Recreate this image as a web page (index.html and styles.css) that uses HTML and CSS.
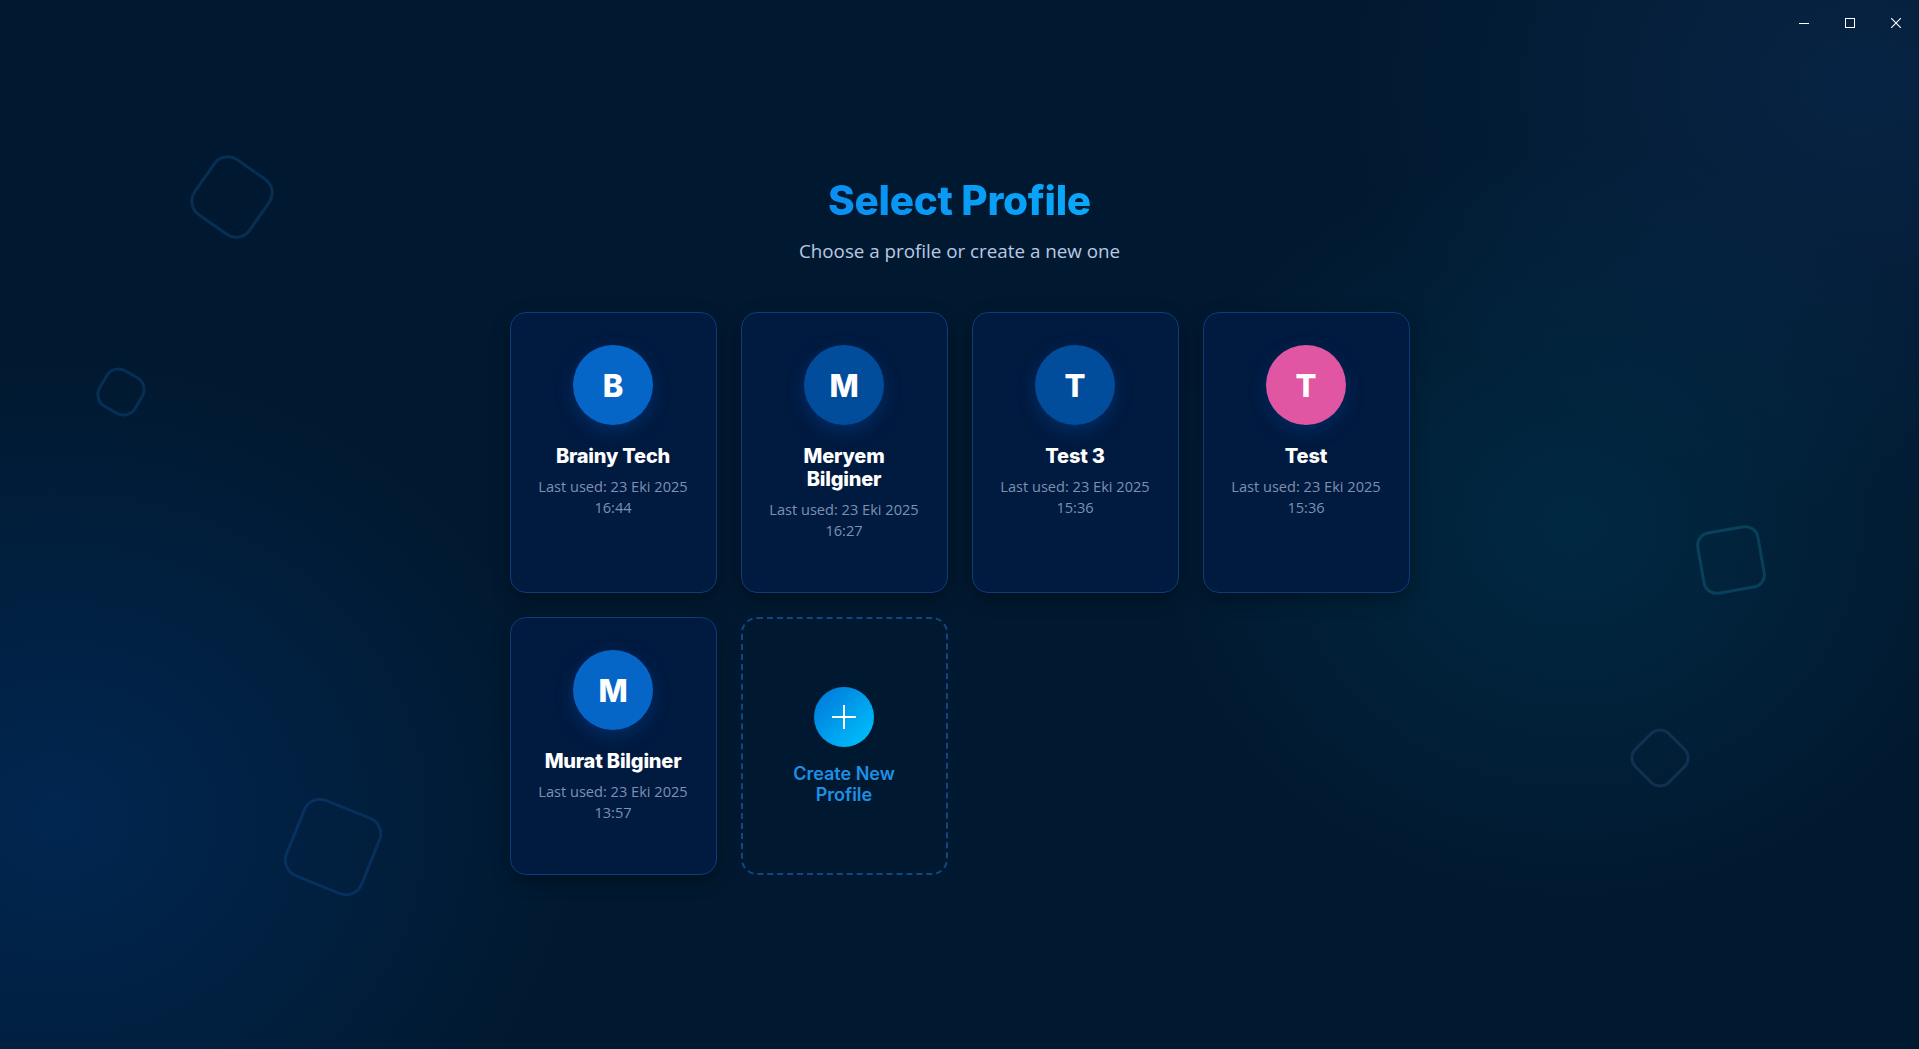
FILE: index.html
```html
<!DOCTYPE html>
<html lang="en">
<head>
<meta charset="utf-8">
<title>Select Profile</title>
<link rel="stylesheet" href="styles.css">
</head>
<body>
<div class="bg-shapes">
  <span class="shape s1"></span>
  <span class="shape s2"></span>
  <span class="shape s3"></span>
  <span class="shape s4"></span>
  <span class="shape s5"></span>
</div>
<header class="titlebar">
  <button class="win-btn" aria-label="Minimize">
    <svg width="10" height="10" viewBox="0 0 10 10"><path d="M0 5.5H10" stroke="#fff" stroke-width="1"/></svg>
  </button>
  <button class="win-btn" aria-label="Maximize">
    <svg width="10" height="10" viewBox="0 0 10 10"><rect x="0.5" y="0.5" width="9" height="9" fill="none" stroke="#fff" stroke-width="1"/></svg>
  </button>
  <button class="win-btn" aria-label="Close">
    <svg width="10" height="10" viewBox="0 0 10 10"><path d="M0 0L10 10M10 0L0 10" stroke="#fff" stroke-width="1.1"/></svg>
  </button>
</header>
<main class="content">
  <h1 class="title">Select Profile</h1>
  <p class="subtitle">Choose a profile or create a new one</p>
  <div class="grid">
    <div class="card">
      <div class="avatar av-blue">B</div>
      <div class="name">Brainy Tech</div>
      <div class="meta">Last used: 23 Eki 2025<br>16:44</div>
    </div>
    <div class="card">
      <div class="avatar av-navy">M</div>
      <div class="name">Meryem<br>Bilginer</div>
      <div class="meta">Last used: 23 Eki 2025<br>16:27</div>
    </div>
    <div class="card">
      <div class="avatar av-navy">T</div>
      <div class="name">Test 3</div>
      <div class="meta">Last used: 23 Eki 2025<br>15:36</div>
    </div>
    <div class="card">
      <div class="avatar av-pink">T</div>
      <div class="name">Test</div>
      <div class="meta">Last used: 23 Eki 2025<br>15:36</div>
    </div>
    <div class="card">
      <div class="avatar av-blue">M</div>
      <div class="name">Murat Bilginer</div>
      <div class="meta">Last used: 23 Eki 2025<br>13:57</div>
    </div>
    <div class="card card-new">
      <div class="plus">
        <svg width="26" height="26" viewBox="0 0 26 26"><path d="M13 1V25M1 13H25" stroke="#fff" stroke-width="2"/></svg>
      </div>
      <div class="new-label">Create New<br>Profile</div>
    </div>
  </div>
</main>
</body>
</html>
```

FILE: styles.css
```css
html, body {
  margin: 0;
  height: 100%;
  overflow: hidden;
}

body {
  position: relative;
  font-family: "Open Sans", "Noto Sans", sans-serif;
  color: #fff;
  background:
    radial-gradient(ellipse 420px 380px at 82% 50%, rgba(0, 70, 100, 0.35), transparent 100%),
    radial-gradient(ellipse 520px 460px at 3% 78%, rgba(0, 55, 120, 0.45), transparent 100%),
    radial-gradient(ellipse 520px 420px at 97% 8%, rgba(20, 55, 105, 0.35), transparent 100%),
    #011930;
}

.bg-shapes {
  position: absolute;
  inset: 0;
  pointer-events: none;
}

.shape {
  position: absolute;
  box-sizing: border-box;
  border: 3px solid rgba(20, 90, 150, 0.35);
  border-radius: 20px;
}

.s1 { left: 197px; top: 162px; width: 70px; height: 70px; transform: rotate(35deg); border-radius: 18px; }
.s2 { left: 99px; top: 370px; width: 44px; height: 44px; transform: rotate(30deg); border-radius: 15px; }
.s3 { left: 1699px; top: 528px; width: 64px; height: 64px; transform: rotate(-10deg); border-radius: 14px; border-color: rgba(20, 110, 140, 0.4); }
.s4 { left: 291px; top: 805px; width: 84px; height: 84px; transform: rotate(22deg); border-radius: 18px; border-color: rgba(20, 80, 150, 0.35); }
.s5 { left: 1635px; top: 733px; width: 50px; height: 50px; transform: rotate(45deg); border-radius: 14px; border-color: rgba(40, 70, 110, 0.45); }

.titlebar {
  position: relative;
  display: flex;
  justify-content: flex-end;
  height: 46px;
}

.win-btn {
  width: 46px;
  height: 46px;
  padding: 0;
  border: 0;
  background: transparent;
  display: flex;
  align-items: center;
  justify-content: center;
}

.content {
  position: relative;
  display: flex;
  flex-direction: column;
  align-items: center;
  padding-top: 131px;
}

.title {
  margin: 0;
  font-family: Inter, sans-serif;
  font-weight: 800;
  font-size: 40.5px;
  line-height: 48px;
  letter-spacing: -0.3px;
  color: #0a9df2;
  background: linear-gradient(90deg, #0a8ff0, #08a8fa);
  -webkit-background-clip: text;
  background-clip: text;
  -webkit-text-fill-color: transparent;
}

.subtitle {
  margin: 14px 0 0;
  font-family: "Open Sans", sans-serif;
  font-weight: 500;
  font-size: 18.8px;
  line-height: 24px;
  color: #b9c9e6;
}

.grid {
  display: grid;
  grid-template-columns: repeat(4, 207px);
  gap: 24px;
  margin-top: 49px;
}

.card {
  box-sizing: border-box;
  display: flex;
  flex-direction: column;
  align-items: center;
  text-align: center;
  padding: 32px 8px 51px;
  background: #011a3f;
  border: 1px solid #0b3d7a;
  border-radius: 16px;
  box-shadow: 0 6px 18px rgba(0, 0, 0, 0.35);
}

.avatar {
  width: 80px;
  height: 80px;
  border-radius: 50%;
  display: flex;
  align-items: center;
  justify-content: center;
  font-family: Inter, sans-serif;
  font-weight: 800;
  font-size: 31px;
  color: #fff;
  box-shadow: 0 6px 18px rgba(0, 90, 200, 0.3);
}

.av-blue { background: #0566c8; }
.av-navy { background: #024d9b; }
.av-pink { background: #e056a2; box-shadow: 0 6px 18px rgba(0, 90, 200, 0.25); }

.name {
  margin-top: 20px;
  font-family: Inter, sans-serif;
  font-weight: 800;
  font-size: 20px;
  line-height: 23px;
  letter-spacing: -0.2px;
  color: #fff;
}

.meta {
  margin-top: 8px;
  font-family: "Open Sans", sans-serif;
  font-size: 14.6px;
  line-height: 21px;
  color: #7d90b2;
}

.card-new {
  justify-content: center;
  padding: 0 8px;
  background: transparent;
  border: 2px dashed #13467f;
  box-shadow: none;
}

.plus {
  width: 60px;
  height: 60px;
  border-radius: 50%;
  display: flex;
  align-items: center;
  justify-content: center;
  background: linear-gradient(135deg, #0074d8, #00c6ff);
}

.new-label {
  margin-top: 16px;
  font-family: Inter, sans-serif;
  font-weight: 600;
  font-size: 18px;
  line-height: 21px;
  color: #1d90e6;
}
```
